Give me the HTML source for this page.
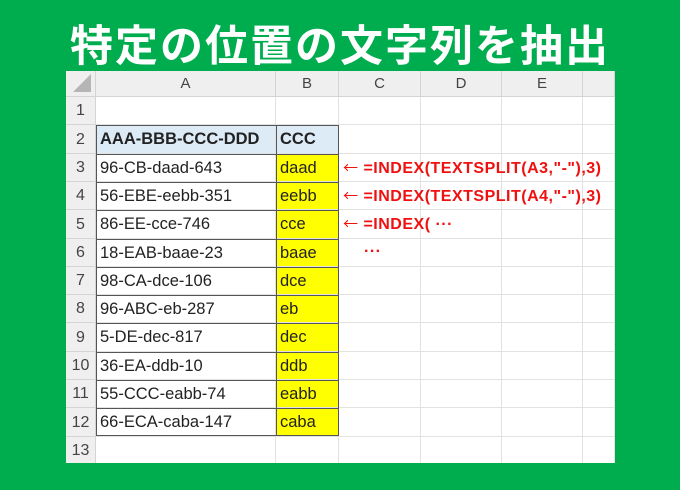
<!DOCTYPE html>
<html><head><meta charset="utf-8"><style>
body{margin:0;width:680px;height:490px;background:#00ad4e;position:relative;overflow:hidden;font-family:"Liberation Sans","Noto Sans CJK JP",sans-serif}
.t{position:absolute;left:0;width:680px;top:17px;text-align:center;color:#fff;font-weight:bold;font-size:43px;letter-spacing:2px;line-height:52px;font-family:"Noto Sans CJK JP",sans-serif}
.sh{position:absolute;left:66px;top:71px;width:549px;height:392px;background:#fff;overflow:hidden}
.c{position:absolute;box-sizing:border-box;font-size:16.5px;color:#222;white-space:nowrap}
.h{background:#efefef;color:#444;text-align:center;border-right:1px solid #d4d4d4;border-bottom:1px solid #d4d4d4;font-size:15px}
.g{border-right:1px solid #e2e2e2;border-bottom:1px solid #e2e2e2}
.f{position:absolute;color:#f01010;font-weight:bold;font-size:16px;letter-spacing:0.5px;white-space:nowrap;line-height:20px;height:20px}
.ar{font-family:"Noto Sans CJK JP",sans-serif;font-weight:normal;font-size:15px}
</style></head><body>
<div class="t">特定の位置の文字列を抽出</div>
<div class="sh" id="s"></div>
<script>
var s=document.getElementById('s'),X=[0,30,210,273,355,436,517,549],H=26,R=28.3,o='';
var a=['','AAA-BBB-CCC-DDD','96-CB-daad-643','56-EBE-eebb-351','86-EE-cce-746','18-EAB-baae-23','98-CA-dce-106','96-ABC-eb-287','5-DE-dec-817','36-EA-ddb-10','55-CCC-eabb-74','66-ECA-caba-147',''];
var b=['','CCC','daad','eebb','cce','baae','dce','eb','dec','ddb','eabb','caba',''];
var L=['','A','B','C','D','E',''];
o+='<div class="c h" style="left:0;top:0;width:30px;height:26px"><div style="position:absolute;right:4px;bottom:4px;width:0;height:0;border-left:18px solid transparent;border-bottom:18px solid #b5b5b5"></div></div>';
for(var j=1;j<7;j++)o+='<div class="c h" style="left:'+X[j]+'px;top:0;width:'+(X[j+1]-X[j])+'px;height:26px;line-height:26px">'+L[j]+'</div>';
for(var i=0;i<13;i++){var y=H+i*R,y2=H+(i+1)*R,h=Math.round(y2)-Math.round(y);y=Math.round(y);
o+='<div class="c h" style="left:0;top:'+y+'px;width:30px;height:'+h+'px;line-height:'+h+'px;font-size:16px">'+(i+1)+'</div>';
for(var j=1;j<7;j++){var st='left:'+X[j]+'px;top:'+y+'px;width:'+(X[j+1]-X[j])+'px;height:'+h+'px;line-height:'+h+'px;padding-left:4px;';var t='';
if(j==1){t=a[i];if(i==1)st+='background:#ddebf7;font-weight:bold;';}
if(j==2){t=b[i];if(i==1)st+='background:#ddebf7;font-weight:bold;';else if(i>1&&i<12)st+='background:#ffff00;';}
o+='<div class="c g" style="'+st+'">'+t+'</div>';}}
o+='<div style="position:absolute;left:30px;top:'+Math.round(H+R)+'px;width:243px;height:'+Math.round(11*R)+'px;box-sizing:border-box;border:1px solid #555"></div>';
o+='<div style="position:absolute;left:210px;top:'+Math.round(H+R)+'px;width:1px;height:'+Math.round(11*R)+'px;background:#555"></div>';
for(var i=2;i<12;i++)o+='<div style="position:absolute;left:30px;top:'+Math.round(H+i*R)+'px;width:243px;height:1px;background:#555"></div>';
s.innerHTML=o;
</script>
<div class="f" style="left:343px;top:158px"><span class="ar">←</span> =INDEX(TEXTSPLIT(A3,"-"),3)</div>
<div class="f" style="left:343px;top:186px"><span class="ar">←</span> =INDEX(TEXTSPLIT(A4,"-"),3)</div>
<div class="f" style="left:343px;top:214px"><span class="ar">←</span> =INDEX( ···</div>
<div class="f" style="left:364px;top:242px">···</div>
</body></html>
